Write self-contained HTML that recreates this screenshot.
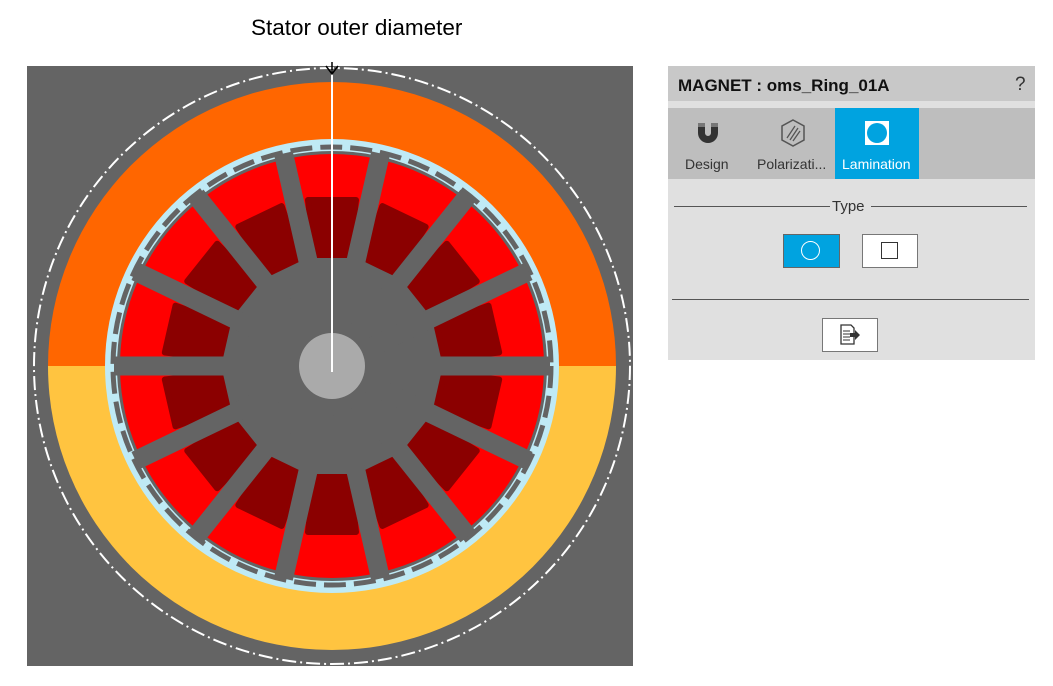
<!DOCTYPE html>
<html><head><meta charset="utf-8"><style>
body{margin:0;width:1053px;height:686px;background:#fff;position:relative;overflow:hidden;font-family:"Liberation Sans",sans-serif}
.abs{position:absolute}
</style></head><body>
<div class="abs" style="left:251px;top:15px;font-size:22.5px;color:#000">Stator outer diameter</div>
<svg class="abs" style="left:0;top:0" width="660" height="686">
<rect x="27" y="66" width="606" height="600" fill="#646464"/>
<g transform="translate(332,366)">
<path d="M-284,0 A284,284 0 0 1 284,0 Z" fill="#ff6600"/>
<path d="M-284,0 A284,284 0 0 0 284,0 Z" fill="#ffc440"/>
<circle r="298" fill="none" stroke="#fff" stroke-width="2" stroke-dasharray="14 4 2 4"/>
<circle r="227" fill="#bfeaf5"/>
<circle r="215" fill="#646464"/>
<circle r="219" fill="none" stroke="#646464" stroke-width="5" stroke-dasharray="22 8"/>
<g id="mags"></g>
<g id="spokes"></g>
<circle r="33" fill="#aaaaaa"/>
</g>
<line x1="332" y1="70" x2="332" y2="372" stroke="#fff" stroke-width="2"/>
<path d="M326,66 L332,74 L338,66 M332,62 L332,74" stroke="#000" stroke-width="1.5" fill="none"/>
</svg>
<script>
(function(){
var g=document.getElementById('mags'),sp=document.getElementById('spokes'),s='',t='';
function sec(r1,r2,a,h){var c=Math.PI/180;
function pt(r,q){return (r*Math.sin(q*c)).toFixed(1)+','+(-r*Math.cos(q*c)).toFixed(1)}
return 'M'+pt(r1,a-h)+' L'+pt(r2,a-h)+' A'+r2+','+r2+' 0 0 1 '+pt(r2,a+h)+' L'+pt(r1,a+h)+' A'+r1+','+r1+' 0 0 0 '+pt(r1,a-h)+' Z';}
for(var i=0;i<14;i++){var a=i*360/14;
s+='<path d="'+sec(150,212,a,12.9)+'" fill="#ff0000"/>';
s+='<polygon points="-24,-166 24,-166 18,-111 -18,-111" transform="rotate('+a+')" fill="#8b0000" stroke="#8b0000" stroke-width="6" stroke-linejoin="round"/>';
var b=a+180/14;
t+='<rect x="-9.5" y="-218" width="19" height="218" fill="#646464" transform="rotate('+b+')"/>';}
g.innerHTML=s;sp.innerHTML=t;})();
</script>
<div class="abs" style="left:668px;top:66px;width:367px;height:294px;background:#e0e0e0">
<div class="abs" style="left:0;top:0;width:367px;height:35px;background:#c8c8c8"></div>
<div class="abs" style="left:10px;top:10px;font-size:17px;font-weight:bold;color:#111">MAGNET : oms_Ring_01A</div>
<div class="abs" style="left:347px;top:8px;font-size:19px;color:#333">?</div>
<div class="abs" style="left:0;top:42px;width:367px;height:71px;background:#bebebe"></div>
<div class="abs" style="left:167px;top:42px;width:84px;height:71px;background:#00a3e0"></div>
<svg class="abs" style="left:28px;top:55px" width="24" height="24"><path d="M2,2 h7 v10 a3,3 0 0 0 6,0 v-10 h7 v10 a10,10 0 0 1 -20,0 z" fill="#333"/><rect x="2" y="2" width="7" height="4" fill="#777"/><rect x="15" y="2" width="7" height="4" fill="#777"/></svg>
<svg class="abs" style="left:110px;top:52px" width="30" height="30"><polygon points="15,2 26,8 26,22 15,28 4,22 4,8" fill="none" stroke="#555" stroke-width="1.5"/><path d="M9,20 L17,8 M12,22 L20,10 M15,23 L22,13" stroke="#555" stroke-width="1.3"/></svg>
<svg class="abs" style="left:196px;top:54px" width="26" height="26"><rect x="1" y="1" width="24" height="24" fill="#fff"/><circle cx="13" cy="13" r="10" fill="#00a3e0"/></svg>
<div class="abs" style="left:17px;top:90px;font-size:14px;color:#333">Design</div>
<div class="abs" style="left:89px;top:90px;font-size:14px;color:#333">Polarizati...</div>
<div class="abs" style="left:174px;top:90px;font-size:14px;color:#fff">Lamination</div>
<div class="abs" style="left:6px;top:140px;width:156px;height:1px;background:#555"></div>
<div class="abs" style="left:203px;top:140px;width:156px;height:1px;background:#555"></div>
<div class="abs" style="left:164px;top:132px;font-size:15px;color:#333">Type</div>
<div class="abs" style="left:115px;top:168px;width:55px;height:32px;background:#00a3e0;border:1px solid #666"></div>
<div class="abs" style="left:133px;top:175px;width:17px;height:17px;border:1.5px solid #fff;border-radius:50%"></div>
<div class="abs" style="left:194px;top:168px;width:54px;height:32px;background:#fff;border:1px solid #777"></div>
<div class="abs" style="left:213px;top:176px;width:15px;height:15px;border:1.5px solid #333"></div>
<div class="abs" style="left:4px;top:233px;width:357px;height:1px;background:#555"></div>
<div class="abs" style="left:154px;top:252px;width:54px;height:32px;background:#fff;border:1px solid #777"></div>
<svg class="abs" style="left:170px;top:257px" width="24" height="24"><path d="M3,2 h10 l3,3 v16 h-13 z" fill="#fff" stroke="#333" stroke-width="1.3"/><path d="M5,8h7M5,11h7M5,14h7M5,17h7" stroke="#333" stroke-width="1"/><path d="M12,10 h5 v-3 l5,5 l-5,5 v-3 h-5z" fill="#333"/></svg>
</div>
</body></html>
